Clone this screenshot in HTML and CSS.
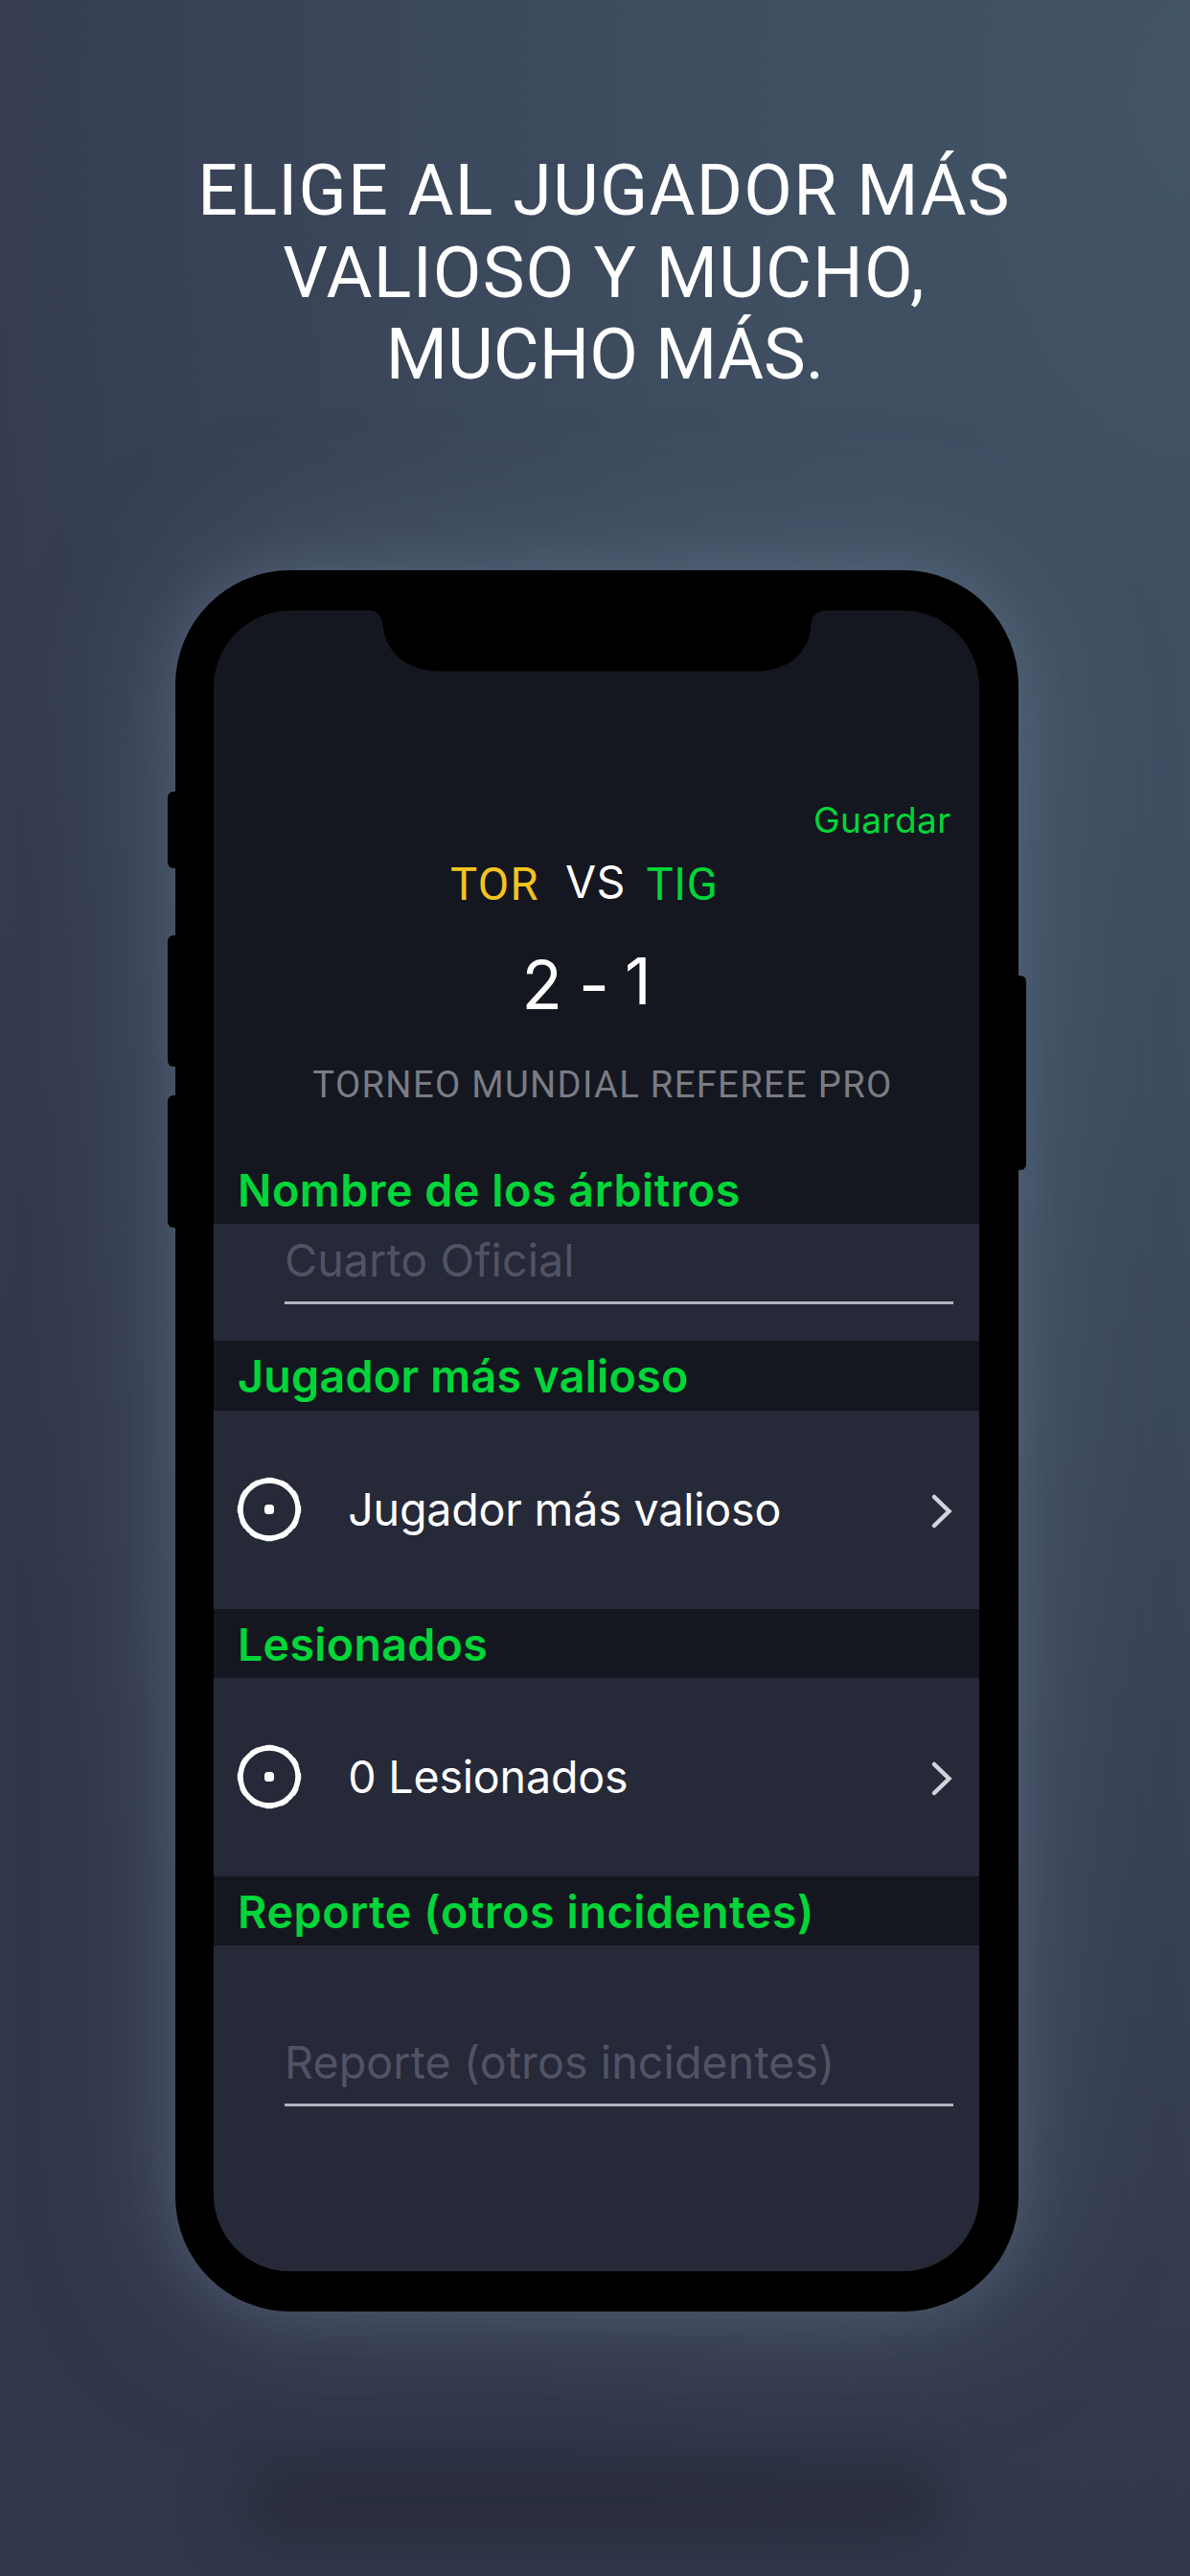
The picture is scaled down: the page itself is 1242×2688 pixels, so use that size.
FILE: index.html
```html
<!DOCTYPE html>
<html lang="es">
<head>
    <meta charset="UTF-8">
    <meta name="viewport" content="width=device-width, initial-scale=1.0">
    <title>Referee Pro</title>
    <link rel="stylesheet" href="styles.css">
</head>
<body>
    <div class="container">
        <h1>
            <span class="line line-1">ELIGE AL JUGADOR MÁS</span>
            <span class="line line-2">VALIOSO Y MUCHO,</span>
            <span class="line line-3">MUCHO MÁS.</span>
        </h1>

        <div class="phone">
            <div class="button mute"></div>
            <div class="button volume-up"></div>
            <div class="button volume-down"></div>
            <div class="button power"></div>

            <div class="screen">
                <svg class="notch" width="476" height="64" viewBox="0 0 475 64" preserveAspectRatio="none">
                    <path d="M0 0C8 0 12.5 6 13.5 15C16 44 39 63.5 74 63.5H401C436 63.5 458 44 459.5 15C460.5 6 466 0 475 0Z" fill="#000"/>
                </svg>

                <a class="save">Guardar</a>
                <div class="teams">
                    <span class="home">TOR</span>
                    <span class="vs">VS</span>
                    <span class="away">TIG</span>
                </div>
                <div class="score">
                    <span class="goals-home">2</span>
                    <span class="dash">-</span>
                    <span class="goals-away">1</span>
                </div>
                <p class="tournament">TORNEO MUNDIAL REFEREE PRO</p>

                <h2 class="referees">Nombre de los árbitros</h2>
                <div class="row row-field">
                    <div class="field">Cuarto Oficial</div>
                </div>

                <h2 class="mvp">Jugador más valioso</h2>
                <div class="row row-link">
                    <svg class="icon" width="68" height="68" viewBox="0 0 68 68">
                        <circle cx="34" cy="34" r="30" fill="none" stroke="#fff" stroke-width="5.5"/>
                        <circle cx="34" cy="34" r="31.5" fill="none" stroke="#fff" stroke-width="3.5" stroke-dasharray="8.25 8.25" stroke-dashoffset="4.125"/>
                        <rect x="29" y="29" width="10" height="10" rx="3.5" fill="#fff"/>
                    </svg>
                    <span class="label">Jugador más valioso</span>
                    <svg class="arrow" width="24" height="38" viewBox="0 0 24 38">
                        <path d="M4 4L19.5 19L4 34" fill="none" stroke="#d3d3dc" stroke-width="4.5" stroke-linecap="round"/>
                    </svg>
                </div>

                <h2 class="injured">Lesionados</h2>
                <div class="row row-link">
                    <svg class="icon" width="68" height="68" viewBox="0 0 68 68">
                        <circle cx="34" cy="34" r="30" fill="none" stroke="#fff" stroke-width="5.5"/>
                        <circle cx="34" cy="34" r="31.5" fill="none" stroke="#fff" stroke-width="3.5" stroke-dasharray="8.25 8.25" stroke-dashoffset="4.125"/>
                        <rect x="29" y="29" width="10" height="10" rx="3.5" fill="#fff"/>
                    </svg>
                    <span class="label">0 Lesionados</span>
                    <svg class="arrow" width="24" height="38" viewBox="0 0 24 38">
                        <path d="M4 4L19.5 19L4 34" fill="none" stroke="#d3d3dc" stroke-width="4.5" stroke-linecap="round"/>
                    </svg>
                </div>

                <h2 class="report">Reporte (otros incidentes)</h2>
                <div class="row row-report">
                    <div class="field">Reporte (otros incidentes)</div>
                </div>
            </div>
        </div>

        <div class="floor-shadow"></div>
    </div>
</body>
</html>
```
FILE: styles.css
```css
* {
    box-sizing: border-box;
}
body {
    margin: 0;
    font-family: Inter, "Liberation Sans", sans-serif;
    color: #fff;
}
.container {
    height: 2688px;
    padding-top: 157px;
    overflow: hidden;
    background: radial-gradient(1550px 2700px at 1242px 100px, #425466 0%, #3e4c5f 38%, #373f53 75%, #31364a 100%);
}
h1 {
    margin: 0 0 181px;
    padding-left: 19px;
    font-family: Roboto, sans-serif;
    font-size: 73.6px;
    font-weight: 400;
    line-height: 85.6px;
    text-align: center;
}
.line {
    display: block;
}
.line-1 {
    letter-spacing: 1.26px;
}
.line-2 {
    letter-spacing: 1.2px;
}
.line-3 {
    padding-left: 2px;
}
.phone {
    position: relative;
    width: 880.5px;
    height: 1817px;
    margin-left: 182.5px;
    padding: 42px 41px 42px 40.5px;
    background-color: #000;
    border-radius: 120px;
    box-shadow: 0 0 50px rgba(104, 122, 142, 0.28), 0 0 140px rgba(104, 122, 142, 0.5);
}
.button {
    position: absolute;
    left: -7.5px;
    width: 20px;
    background-color: #000;
    border-radius: 6px;
}
.mute {
    top: 231px;
    height: 80px;
}
.volume-up {
    top: 381px;
    height: 137px;
}
.volume-down {
    top: 548px;
    height: 138px;
}
.power {
    top: 423px;
    left: auto;
    right: -8px;
    height: 203px;
}
.screen {
    position: relative;
    display: flex;
    flex-direction: column;
    height: 1733px;
    overflow: hidden;
    background-color: #14171f;
    border-radius: 80px;
}
.notch {
    position: absolute;
    top: 0;
    left: 163px;
}
.save {
    margin: 197px 29.5px 0 0;
    font-size: 37px;
    line-height: 44px;
    letter-spacing: 0.36px;
    text-align: right;
    color: #00d639;
}
.teams {
    display: flex;
    height: 56px;
    margin: 17px 0 0 247px;
    font-family: Roboto, sans-serif;
    font-size: 47.2px;
    line-height: 56px;
    letter-spacing: 1.3px;
}
.home {
    width: 120px;
    color: #f4c321;
}
.vs {
    width: 84.5px;
    margin-top: -3px;
    font-family: Inter, sans-serif;
    font-size: 46.6px;
    letter-spacing: 0.3px;
}
.away {
    color: #00d639;
    letter-spacing: 0.6px;
}
.score {
    display: flex;
    height: 80px;
    margin: 37px 0 0 321.5px;
    font-size: 69.5px;
    line-height: 80px;
}
.goals-home {
    width: 59.5px;
}
.dash {
    width: 48px;
}
.goals-away {
    margin-top: -4.5px;
    font-size: 68px;
}
.tournament {
    margin: 41px 0 50px;
    padding-left: 13px;
    font-family: Roboto, sans-serif;
    font-size: 38.2px;
    line-height: 46px;
    letter-spacing: 1.31px;
    text-align: center;
    color: #7a7c85;
}
h2 {
    flex: none;
    height: 72.2px;
    margin: 0;
    padding-left: 25px;
    font-size: 46.6px;
    font-weight: 600;
    line-height: 74.5px;
    letter-spacing: 0.54px;
    color: #00d639;
}
.mvp,
.injured {
    letter-spacing: 0.27px;
}
.report {
    letter-spacing: 0.61px;
}
.row {
    background-color: #262937;
}
.row-field {
    height: 122.4px;
    padding-top: 8px;
}
.row-link {
    display: flex;
    align-items: center;
    height: 207px;
    padding: 0 27px 0 23.7px;
}
.row-report {
    flex: 1;
    padding-top: 92.5px;
}
.field {
    margin: 0 27px 0 74px;
    padding-bottom: 13px;
    border-bottom: 3px solid #b3b4c0;
    font-size: 46.6px;
    line-height: 60px;
    letter-spacing: 0.1px;
    color: #515364;
}
.label {
    flex: 1;
    margin-left: 48.5px;
    font-size: 46.6px;
    letter-spacing: -0.2px;
}
.arrow {
    margin-top: 3px;
}
.floor-shadow {
    width: 740px;
    height: 84px;
    margin: 156px auto 0;
    background-color: #292d3e;
    border-radius: 40px;
    filter: blur(28px);
}
```
